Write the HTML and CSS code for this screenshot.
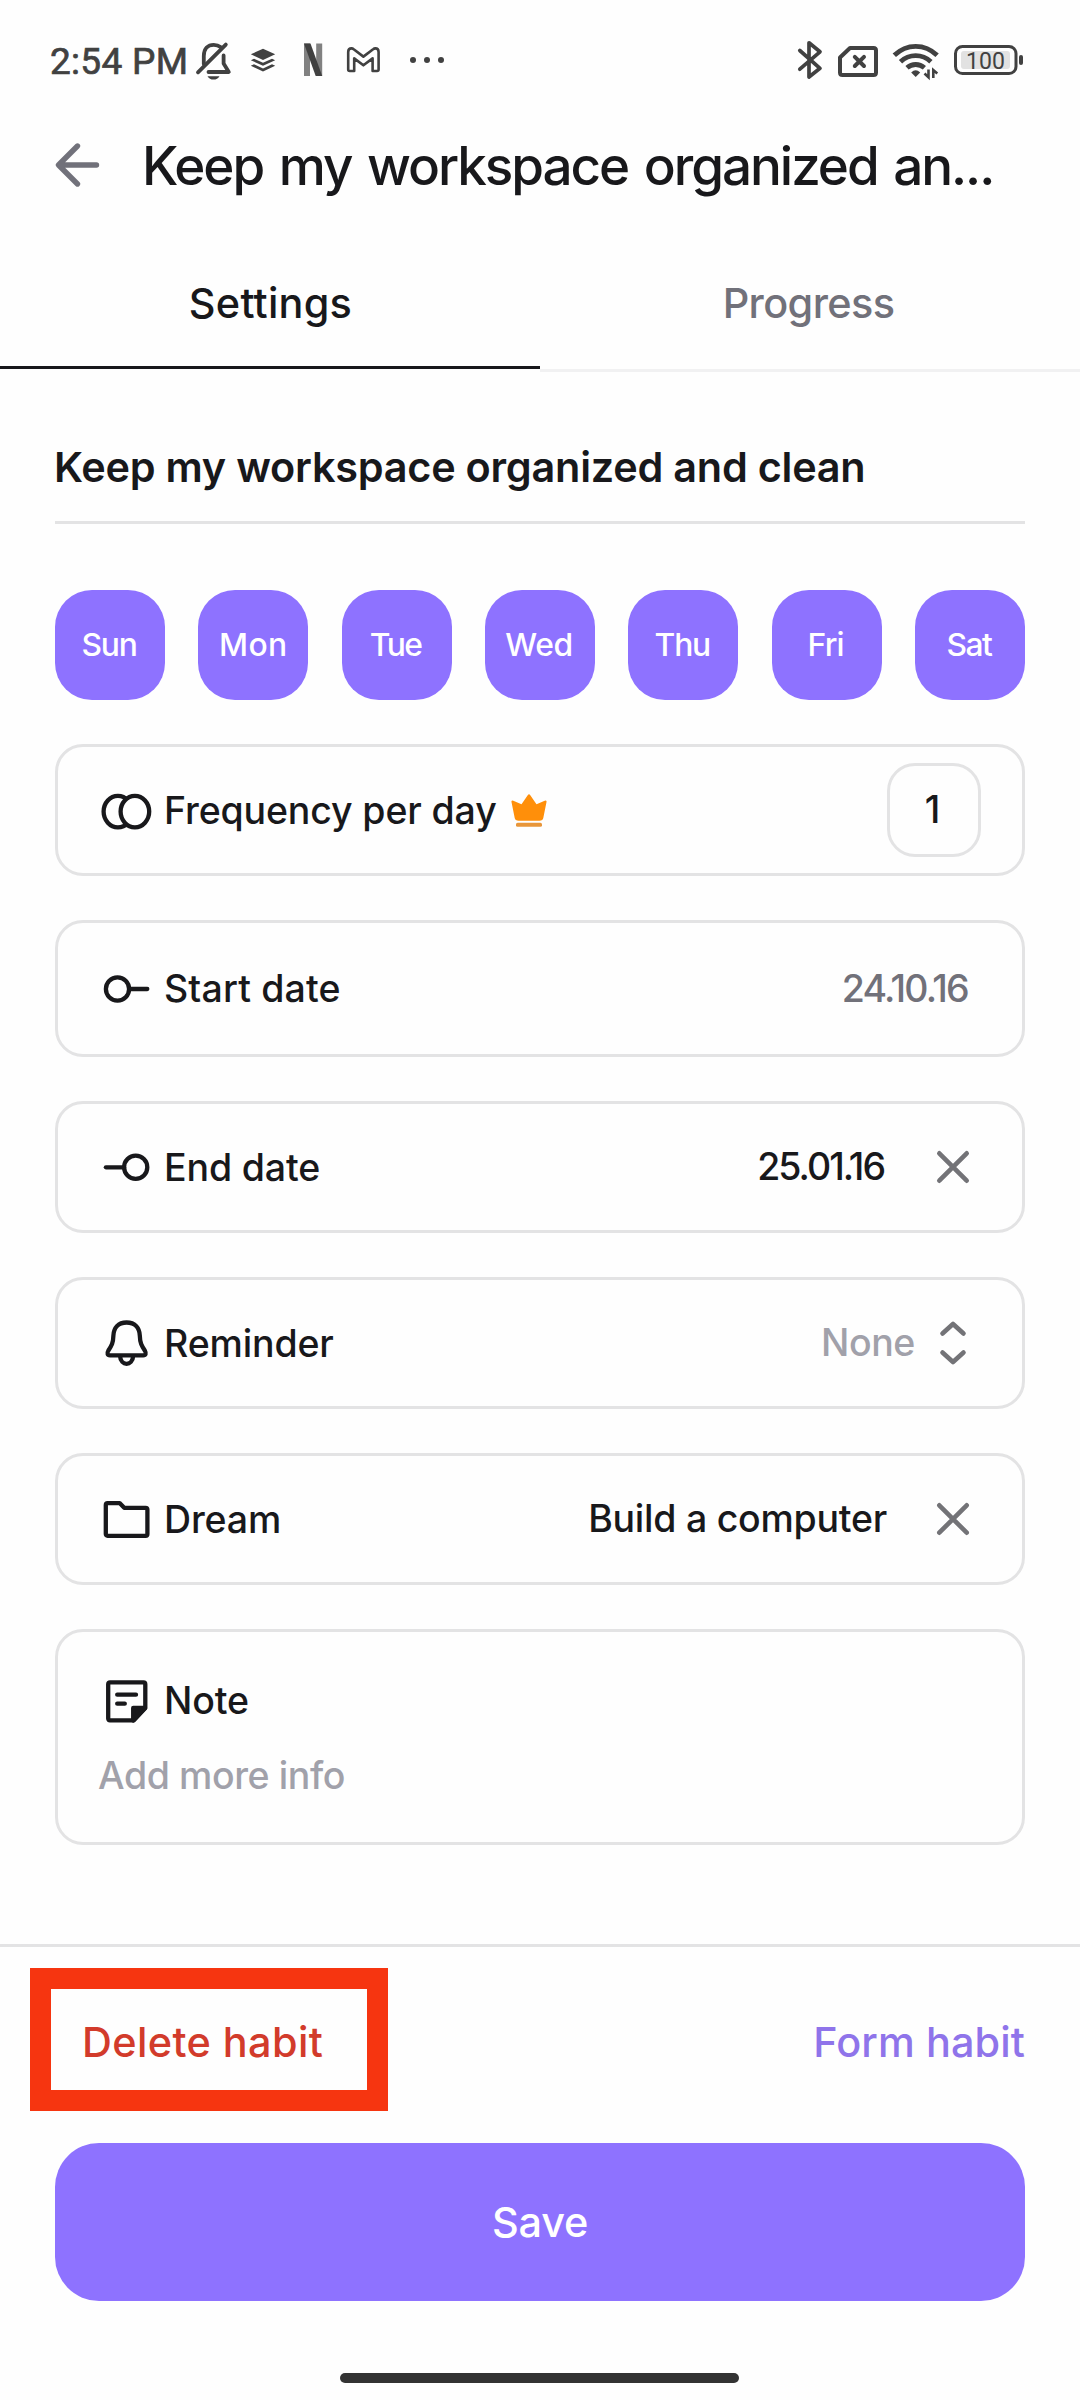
FILE: index.html
```html
<!DOCTYPE html>
<html lang="en">
<head>
<meta charset="utf-8">
<title>Habit settings</title>
<link rel="stylesheet" href="styles.css">
</head>
<body>
<div class="screen">
  <div class="status">
    <div class="status-group">
      <span class="time">2:54 PM</span>
      <svg class="ico-bell-off" width="40" height="44" viewBox="194 40 40 44" fill="none" stroke="#414141" stroke-width="3.8" stroke-linecap="round" stroke-linejoin="round">
        <path d="M203.8 64V56C203.8 48.600 208 44.800 213.700 44.800C216.500 44.800 218.800 45.600 220.500 47"/>
        <path d="M198 72.300L225.800 44.600"/>
        <path d="M223.600 55.500V63.500L228.800 72H208.500" />
        <path d="M207.500 76.200H219.500Q217.500 79.600 213.500 79.600Q209.500 79.600 207.500 76.200Z" fill="#414141" stroke="none"/>
      </svg>
      <svg class="ico-stack" width="30" height="44" viewBox="248 40 30 44" fill="#414141">
        <path d="M263 48.800L275.200 54.200L263 60L250.800 54.200Z"/>
        <path d="M250.800 60.200L254 58.700L263 62.800L272 58.700L275.200 60.200L263 65.800Z"/>
        <path d="M250.800 65.800L254 64.300L263 68.400L272 64.300L275.200 65.800L263 71.400Z"/>
      </svg>
      <svg class="ico-n" width="22" height="44" viewBox="302 40 22 44">
        <path d="M304 43.500H310V76H304ZM316.200 43.500H322.200V76H316.200Z" fill="#818181"/>
        <path d="M304 43.500H310.500L322.200 76H315.700Z" fill="#414141"/>
      </svg>
      <svg class="ico-mail" width="38" height="44" viewBox="345 40 38 44" fill="none" stroke="#414141" stroke-width="2.600" stroke-linejoin="round">
        <path d="M348.200 52Q348.200 48.400 351.500 48.400Q352.700 48.400 353.700 49.200L363.400 56.600L373.100 49.200Q374.100 48.400 375.300 48.400Q378.600 48.400 378.600 52V69.500Q378.600 71 377.100 71H372.600V58.400L363.400 65.300L354.200 58.400V71H349.700Q348.200 71 348.200 69.500Z"/>
      </svg>
      <svg class="ico-more" width="38" height="44" viewBox="408 40 38 44" fill="#414141">
        <circle cx="413" cy="60" r="3"/><circle cx="427" cy="60" r="3"/><circle cx="441" cy="60" r="3"/>
      </svg>
    </div>
    <div class="status-group">
      <svg width="28" height="44" viewBox="796 40 28 44" fill="none" stroke="#414141" stroke-width="3.700" stroke-linecap="round" stroke-linejoin="round">
        <path d="M799.800 50.500L820 68.300L809 77V42.800L820 51.800L799.800 69.200"/>
      </svg>
      <svg class="ico-sim" width="44" height="44" viewBox="836 40 44 44" fill="none" stroke="#414141" stroke-width="4" stroke-linecap="round" stroke-linejoin="round">
        <path d="M850 48H873.500Q876 48 876 50.500V72.500Q876 75 873.500 75H842.500Q840 75 840 72.500V57.500Z"/>
        <path d="M854.800 56.800L864 66M864 56.800L854.800 66"/>
      </svg>
      <svg class="ico-wifi" width="50" height="44" viewBox="890 40 50 44" fill="none" stroke="#414141" stroke-width="4.800">
        <path d="M894.300 55.300Q903.500 46.300 915.700 46.300Q927.900 46.300 937.100 55.300"/>
        <path d="M900.500 61.800Q907 55.700 915.700 55.700Q924.400 55.700 930.900 61.800"/>
        <path d="M907 67.800Q910.800 64.500 915.700 64.500Q920.600 64.500 924.400 67.800"/>
        <path d="M911.200 72.500Q915.700 68 920.200 72.500L915.700 77Z" fill="#414141" stroke="none"/>
        <path d="M928.500 69.500V77.200L924.500 73.500M933.300 78V70L937.300 73.500" stroke-width="2.600"/>
      </svg>
      <svg class="ico-battery" width="73" height="44" viewBox="952 40 73 44">
        <rect x="955.500" y="46.500" width="60.500" height="27" rx="7" fill="none" stroke="#414141" stroke-width="3"/>
        <rect x="961" y="51" width="49" height="18" rx="3" fill="#e2e2e2"/>
        <rect x="1019" y="55" width="4" height="10" rx="2" fill="#414141"/>
        <text x="985.500" y="69" text-anchor="middle" class="battery-text">100</text>
      </svg>
    </div>
  </div>

  <header class="header">
    <svg width="48" height="48" viewBox="0 0 48 48" fill="none" stroke="#71717a" stroke-width="5.400" stroke-linecap="round" stroke-linejoin="round">
      <path d="M43.500 24H6M24.500 5L5.500 24L24.500 43"/>
    </svg>
    <h1 class="title">Keep my workspace organized an...</h1>
  </header>

  <nav class="tabs">
    <div class="tab active"><span class="settings">Settings</span></div>
    <div class="tab"><span class="progress">Progress</span></div>
  </nav>

  <main class="content">
    <div class="name">Keep my workspace organized and clean</div>

    <div class="days">
      <span class="day sun">Sun</span><span class="day mon">Mon</span><span class="day tue">Tue</span><span class="day">Wed</span><span class="day thu">Thu</span><span class="day fri">Fri</span><span class="day sat">Sat</span>
    </div>

    <div class="cards">
      <div class="card">
        <svg class="icon" viewBox="0 0 54 54"><ellipse cx="18.900" cy="28.600" rx="14.300" ry="15.700"/><ellipse cx="35.900" cy="28.600" rx="14.300" ry="15.700" fill="#fff"/></svg>
        <span class="label">Frequency per day</span>
        <svg class="crown" width="36" height="40" viewBox="0 0 36 40">
          <path d="M.4 11.500Q.8 9.900 2.300 10.800L10.500 14.300L16.700 5.200Q18 3.300 19.300 5.200L25.500 14.300L33.700 10.800Q35.200 9.900 35.600 11.500L32.300 28Q31.700 30.800 28.500 30.800H7.500Q4.300 30.800 3.700 28Z" fill="#ff8f0a"/>
          <rect x="5" y="32.800" width="26" height="4" rx="1.600" fill="#e8963a"/>
        </svg>
        <span class="stepper">1</span>
      </div>
      <div class="card tall">
        <svg class="icon" viewBox="0 0 54 54"><circle cx="18.500" cy="27" r="11.600"/><path d="M30 27H48.300"/></svg>
        <span class="label wide">Start date</span>
        <span class="value start">24.10.16</span>
      </div>
      <div class="card">
        <svg class="icon" viewBox="0 0 54 54"><circle cx="36.700" cy="27.300" r="11.600"/><path d="M25 27.300H6.900"/></svg>
        <span class="label">End date</span>
        <span class="value end">25.01.16</span>
        <svg class="action" viewBox="0 0 56 56"><path d="M14.300 14.300L41.700 41.700M41.700 14.300L14.300 41.700"/></svg>
      </div>
      <div class="card">
        <svg class="icon" viewBox="0 0 54 54"><path d="M27.600 6.500C19 6.500 14.700 12 14.400 19.500C14.200 27 12.600 29.500 9.400 34.500C7.700 37.500 8.500 39.300 11 39.300H44.200C46.700 39.300 47.500 37.500 45.800 34.500C42.600 29.500 41 27 40.800 19.500C40.500 12 36.200 6.500 27.600 6.500ZM21 40C21.800 50.500 33.400 50.500 34.200 40"/></svg>
        <span class="label">Reminder</span>
        <span class="value none">None</span>
        <svg class="action" viewBox="0 0 56 56"><path d="M17.500 18.500L28 9L38.500 18.500M17.500 37.500L28 47L38.500 37.500"/></svg>
      </div>
      <div class="card">
        <svg class="icon" viewBox="0 0 54 54"><path d="M8.600 11.100H20.600L25.200 15.800H46.600Q48.400 15.800 48.400 17.600V42Q48.400 43.800 46.600 43.800H8.600Q6.800 43.800 6.800 42V12.900Q6.800 11.100 8.600 11.100Z"/></svg>
        <span class="label">Dream</span>
        <span class="value">Build a computer</span>
        <svg class="action" viewBox="0 0 56 56"><path d="M14.300 14.300L41.700 41.700M41.700 14.300L14.300 41.700"/></svg>
      </div>
      <div class="card note">
        <div class="note-head">
          <svg class="icon" viewBox="0 0 54 54"><path d="M11 8.400H44.500Q46.300 8.400 46.300 10.200V34L34.800 46.400H11Q9.200 46.400 9.200 44.600V10.200Q9.200 8.400 11 8.400ZM18.200 20.700H37M18.200 29.700H25.800"/><path d="M34.200 34H46L34.200 46.400Z" fill="#18181b"/></svg>
          <span class="label">Note</span>
        </div>
        <div class="placeholder">Add more info</div>
      </div>
    </div>
  </main>

  <footer class="footer">
    <div class="actions">
      <div class="highlight"><span class="delete">Delete habit</span></div>
      <span class="form">Form habit</span>
    </div>
    <div class="save">Save</div>
    <div class="home-bar"></div>
  </footer>
</div>
</body>
</html>
```
FILE: styles.css
```css
* { box-sizing: border-box; }
body {
  margin: 0;
  background: #fff;
  color: #18181b;
  font-family: Inter, "Liberation Sans", sans-serif;
  font-weight: 500;
}
svg { display: block; flex: none; }
.screen { width: 1080px; height: 2400px; display: flex; flex-direction: column; background: #fefefe; overflow: hidden; }

.status { height: 124px; padding: 0 55px 0 50px; display: flex; justify-content: space-between; align-items: center; }
.status-group { display: flex; align-items: center; }
.time { width: 144px; font: 400 37px/44px Roboto, sans-serif; letter-spacing: .3px; color: #414141; -webkit-text-stroke: .7px #414141; white-space: nowrap; }
.ico-stack { margin-left: 14px; }
.ico-n { margin-left: 24px; }
.ico-mail { margin-left: 21px; }
.ico-more { margin-left: 25px; }
.ico-sim { margin-left: 12px; }
.ico-wifi { margin-left: 10px; }
.ico-battery { margin-left: 12px; }
.battery-text { font: 400 23px Roboto, sans-serif; fill: #414141; }

.header { height: 82px; padding-left: 53px; display: flex; align-items: center; }
.title { margin: 1px 0 0 41px; font-size: 53px; font-weight: 500; line-height: 66px; letter-spacing: -2.050px; word-spacing: 3.500px; white-space: nowrap; }

.tabs { display: flex; align-items: flex-start; height: 166px; }
.tab { flex: 1; height: 166px; padding-top: 67px; text-align: center; font-size: 41.400px; line-height: 60px; color: #71717a; border-bottom: 3px solid #f1f1f2; }
.tab.active { height: 163px; color: #18181b; border-bottom-color: #18181b; }
.settings { padding-left: 1px; letter-spacing: .25px; }
.progress { padding-right: 3px; letter-spacing: -.6px; }

.content { padding: 0 55px; }
.name { height: 152px; padding-top: 65px; font-size: 41.400px; font-weight: 600; line-height: 60px; letter-spacing: -.23px; text-indent: -1px; border-bottom: 3px solid #e3e3e4; white-space: nowrap; }

.days { margin-top: 66px; display: flex; justify-content: space-between; }
.day { width: 110px; height: 110px; padding-right: 2px; border-radius: 37px; background: #8e72ff; color: #fff; font-size: 31.800px; line-height: 109px; text-align: center; letter-spacing: -.4px; }
.sun, .thu { letter-spacing: -1.200px; }
.mon { padding-right: 0; letter-spacing: .5px; }
.tue, .sat { letter-spacing: -1.500px; }
.fri { letter-spacing: -.8px; }

.cards { margin-top: 44px; display: flex; flex-direction: column; gap: 44px; }
.card { height: 132px; padding: 0 41px; border: 3px solid #e3e3e4; border-radius: 28px; display: flex; align-items: center; font-size: 37.500px; line-height: 54px; white-space: nowrap; }
.tall { height: 137px; }
.icon { width: 54px; height: 54px; fill: none; stroke: #18181b; stroke-width: 4.300px; stroke-linecap: round; stroke-linejoin: round; }
.label { margin: 1px 0 0 11px; letter-spacing: -.14px; }
.wide { letter-spacing: .15px; }
.crown { margin-left: 14px; }
.stepper { margin-left: auto; width: 94px; height: 94px; padding-right: 3px; border: 3px solid #e3e3e4; border-radius: 28px; line-height: 87px; text-align: center; }
.value { margin-left: auto; letter-spacing: -.25px; }
.value + .action { margin-left: 38px; }
.action { width: 56px; height: 56px; fill: none; stroke: #737377; stroke-width: 4.600px; stroke-linecap: round; stroke-linejoin: round; }
.start { margin-right: 13px; color: #71717a; letter-spacing: -1.700px; }
.end { letter-spacing: -2px; }
.end + .action { margin-left: 41px; }
.none { color: #a1a1aa; letter-spacing: -.4px; }
.none + .action { margin-left: 10px; }

.note { height: 216px; display: block; padding-top: 41px; }
.note-head { display: flex; align-items: center; }
.placeholder { margin-top: 21px; text-indent: -1px; color: #a1a1aa; letter-spacing: -.4px; }

.footer { margin-top: 99px; border-top: 3px solid #e3e3e4; }
.actions { display: flex; justify-content: space-between; padding: 21px 55px 0 30px; font-size: 41.400px; line-height: 60px; }
.highlight { width: 358px; height: 143px; border: 21px solid #f63510; padding: 23px 0 0 31px; white-space: nowrap; }
.delete { color: #d23b2b; letter-spacing: .4px; }
.form { margin-top: 44px; color: #8f74ea; letter-spacing: .1px; }
.save { margin: 32px 55px 0; height: 158px; border-radius: 44px; background: #8e72ff; color: #fff; font-size: 41.400px; line-height: 158px; text-align: center; letter-spacing: -.2px; }
.home-bar { width: 399px; height: 10px; margin: 72px 0 0 340px; border-radius: 5px; background: #333; }
```
